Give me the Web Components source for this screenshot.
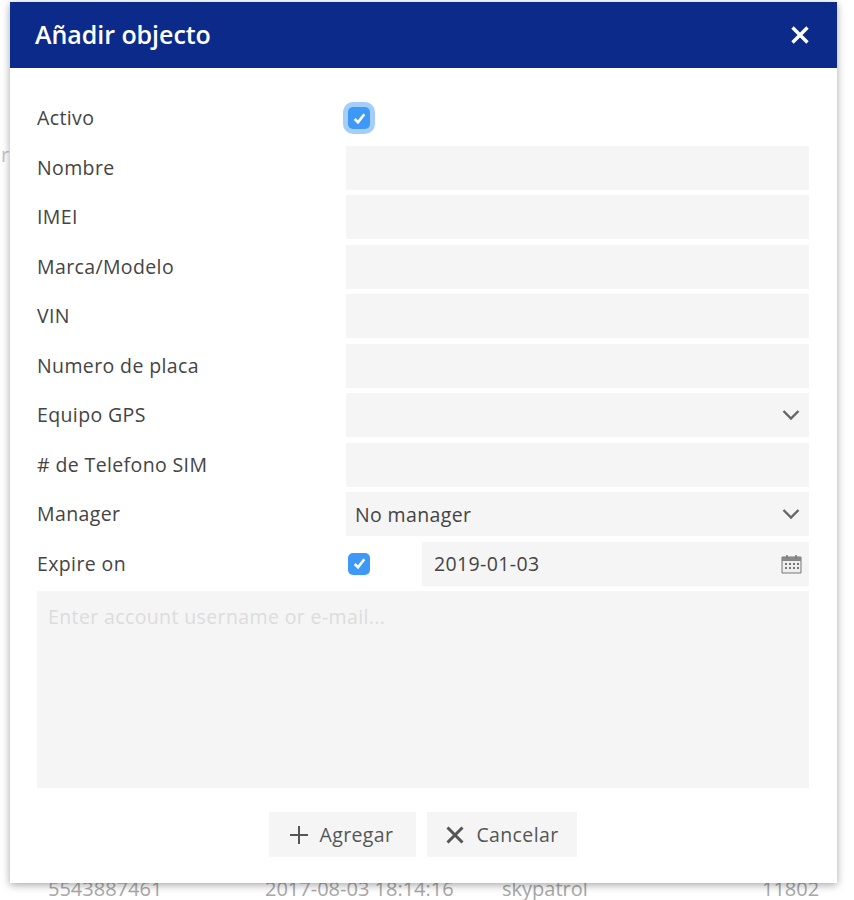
<!DOCTYPE html>
<html>
<head>
<meta charset="utf-8">
<title>Añadir objecto</title>
<style>
    html, body { margin: 0; padding: 0; background: #fff; }
    body { width: 854px; height: 900px; overflow: hidden; position: relative; font-family: "Open Sans", sans-serif; }
</style>
</head>
<body>
<back-table></back-table>
<modal-dialog heading="Añadir objecto">
    <form-row label="Activo"><check-box focused></check-box></form-row>
    <form-row label="Nombre"><text-field></text-field></form-row>
    <form-row label="IMEI"><text-field></text-field></form-row>
    <form-row label="Marca/Modelo"><text-field></text-field></form-row>
    <form-row label="VIN"><text-field></text-field></form-row>
    <form-row label="Numero de placa"><text-field></text-field></form-row>
    <form-row label="Equipo GPS"><text-field icon="chevron"></text-field></form-row>
    <form-row label="# de Telefono SIM"><text-field></text-field></form-row>
    <form-row label="Manager"><text-field icon="chevron" value="No manager"></text-field></form-row>
    <form-row label="Expire on"><date-field value="2019-01-03"></date-field></form-row>
    <note-area placeholder="Enter account username or e-mail..."></note-area>
    <dialog-button slot="footer" icon="plus">Agregar</dialog-button>
    <dialog-button slot="footer" icon="cross">Cancelar</dialog-button>
</modal-dialog>

<script>
const ICONS = {
    chevron: '<svg width="20" height="12" viewBox="0 0 20 12"><path d="M2.5 2 10 9.5 17.5 2" fill="none" stroke="#666" stroke-width="2.4"/></svg>',
    plus: '<svg width="20" height="20" viewBox="0 0 20 20"><path d="M10 1v18M1 10h18" fill="none" stroke="#555" stroke-width="2"/></svg>',
    cross: '<svg width="20" height="20" viewBox="0 0 20 20"><path d="M2.5 2.5l15 15M17.5 2.5l-15 15" fill="none" stroke="#555" stroke-width="3"/></svg>',
    calendar: '<svg width="21" height="20" viewBox="0 0 21 20"><path d="M1 3h19v16H1z" fill="#eee" stroke="#777" stroke-width="1"/><path d="M1 3h19v4H1z" fill="#888"/><path d="M6 1v3M15 1v3" stroke="#777" stroke-width="1.5"/><path d="M4 9h2v2H4zM8 9h2v2H8zM12 9h2v2h-2zM16 9h2v2h-2zM4 13h2v2H4zM8 13h2v2H8zM12 13h2v2h-2zM16 13h2v2h-2z" fill="#777"/></svg>'
};

class BackTable extends HTMLElement {
    constructor() {
        super();
        this.attachShadow({ mode: 'open' });
        this.shadowRoot.innerHTML = `
            <style>
                :host {
                    display: flex;
                    flex-direction: column;
                    justify-content: space-between;
                    height: 900px;
                    box-sizing: border-box;
                    padding-top: 141px;
                    color: #a8a8a8;
                    font-size: 20px;
                }
                .stray { padding-left: 1px; line-height: 28px; color: #c4c4c4; }
                .row { display: flex; padding-left: 48px; line-height: 22px; white-space: nowrap; }
                .imei { width: 217px; }
                .date { width: 237px; }
                .proto { width: 260px; }
            </style>
            <div class="stray">r</div>
            <div class="row">
                <span class="imei">5543887461</span>
                <span class="date">2017-08-03 18:14:16</span>
                <span class="proto">skypatrol</span>
                <span>11802</span>
            </div>
        `;
    }
}

class ModalDialog extends HTMLElement {
    constructor() {
        super();
        this.attachShadow({ mode: 'open' });
        this.shadowRoot.innerHTML = `
            <style>
                :host {
                    display: flex;
                    flex-direction: column;
                    position: absolute;
                    left: 10px;
                    top: 2px;
                    width: 827px;
                    height: 881px;
                    background: #fff;
                    box-shadow: 0 2px 8px rgba(0, 0, 0, 0.35);
                }
                header {
                    display: flex;
                    align-items: center;
                    justify-content: space-between;
                    height: 66px;
                    padding: 0 27px 0 25px;
                    background: #0b2a8a;
                    color: #fff;
                    font-size: 25px;
                    font-weight: 600;
                    letter-spacing: -0.05px;
                }
                .title { margin-bottom: 2px; }
                .close { display: flex; }
                .content {
                    display: flex;
                    flex-direction: column;
                    padding: 28px 28px 0 27px;
                }
                footer {
                    display: flex;
                    justify-content: center;
                    gap: 11px;
                    margin-top: 24px;
                    padding-right: 1px;
                }
            </style>
            <header>
                <span class="title"></span>
                <span class="close"><svg width="20" height="20" viewBox="0 0 20 20"><path d="M2.5 2.5l15 15M17.5 2.5l-15 15" fill="none" stroke="#fff" stroke-width="3.4"/></svg></span>
            </header>
            <div class="content"><slot></slot></div>
            <footer><slot name="footer"></slot></footer>
        `;
        this.shadowRoot.querySelector('.title').textContent = this.getAttribute('heading');
    }
}

class FormRow extends HTMLElement {
    constructor() {
        super();
        this.attachShadow({ mode: 'open' });
        this.shadowRoot.innerHTML = `
            <style>
                :host {
                    display: flex;
                    align-items: center;
                    height: 44px;
                    margin-bottom: 5.5px;
                    color: #444;
                    font-size: 19.5px;
                    letter-spacing: 0.38px;
                }
                .label { width: 309px; flex: none; padding-bottom: 1px; }
                .field { flex: 1; display: flex; align-items: center; min-width: 0; }
            </style>
            <span class="label"></span>
            <div class="field"><slot></slot></div>
        `;
        this.shadowRoot.querySelector('.label').textContent = this.getAttribute('label');
    }
}

class CheckBox extends HTMLElement {
    constructor() {
        super();
        this.attachShadow({ mode: 'open' });
        this.shadowRoot.innerHTML = `
            <style>
                :host {
                    display: flex;
                    align-items: center;
                    justify-content: center;
                    box-sizing: border-box;
                    width: 22px;
                    height: 22px;
                    margin-left: 2px;
                    border-radius: 5px;
                    background: #3d99f5;
                }
                :host([focused]) { box-shadow: 0 0 0 5px #a4cdf8; }
            </style>
            <svg width="15" height="15" viewBox="0 0 14 14"><path d="M2.5 7.5 5.6 10.5 11.5 3" fill="none" stroke="#fff" stroke-width="2.4"/></svg>
        `;
    }
}

class TextField extends HTMLElement {
    constructor() {
        super();
        this.attachShadow({ mode: 'open' });
        const icon = this.getAttribute('icon');
        this.shadowRoot.innerHTML = `
            <style>
                :host {
                    display: flex;
                    flex: 1;
                    align-items: center;
                    justify-content: space-between;
                    box-sizing: border-box;
                    height: 44px;
                    padding: 0 8px 0 9px;
                    background: #f5f5f5;
                    color: #444;
                }
                svg { display: block; }
            </style>
            <span class="value"></span>
            ${icon ? ICONS[icon] : ''}
        `;
        this.shadowRoot.querySelector('.value').textContent = this.getAttribute('value') || '';
    }
}

class DateField extends HTMLElement {
    constructor() {
        super();
        this.attachShadow({ mode: 'open' });
        this.shadowRoot.innerHTML = `
            <style>
                :host { display: flex; flex: 1; align-items: center; }
                .box {
                    display: flex;
                    flex: 1;
                    align-items: center;
                    justify-content: space-between;
                    height: 44px;
                    margin-left: 52px;
                    padding: 0 7px 0 12px;
                    background: #f5f5f5;
                }
                svg { display: block; }
            </style>
            <check-box></check-box>
            <div class="box"><span class="value"></span>${ICONS.calendar}</div>
        `;
        this.shadowRoot.querySelector('.value').textContent = this.getAttribute('value');
    }
}

class NoteArea extends HTMLElement {
    constructor() {
        super();
        this.attachShadow({ mode: 'open' });
        this.shadowRoot.innerHTML = `
            <style>
                :host {
                    display: block;
                    box-sizing: border-box;
                    height: 197px;
                    padding: 12px 11px;
                    background: #f5f5f5;
                    color: #dcdcdc;
                    font-size: 19.5px;
                    letter-spacing: 0.38px;
                    line-height: 27px;
                }
            </style>
            <span class="hint"></span>
        `;
        this.shadowRoot.querySelector('.hint').textContent = this.getAttribute('placeholder');
    }
}

class DialogButton extends HTMLElement {
    constructor() {
        super();
        this.attachShadow({ mode: 'open' });
        this.shadowRoot.innerHTML = `
            <style>
                :host {
                    display: flex;
                    align-items: center;
                    gap: 10px;
                    box-sizing: border-box;
                    height: 45px;
                    padding: 0 20px;
                    background: #f5f5f5;
                    color: #555;
                    font-size: 19.5px;
                    letter-spacing: 0.38px;
                }
                :host([icon="plus"]) { padding-right: 23px; }
                :host([icon="cross"]) { padding-left: 18px; padding-right: 18px; gap: 11px; }
                svg { display: block; }
            </style>
            ${ICONS[this.getAttribute('icon')]}
            <slot></slot>
        `;
    }
}

customElements.define('back-table', BackTable);
customElements.define('modal-dialog', ModalDialog);
customElements.define('form-row', FormRow);
customElements.define('check-box', CheckBox);
customElements.define('text-field', TextField);
customElements.define('date-field', DateField);
customElements.define('note-area', NoteArea);
customElements.define('dialog-button', DialogButton);
</script>
</body>
</html>
